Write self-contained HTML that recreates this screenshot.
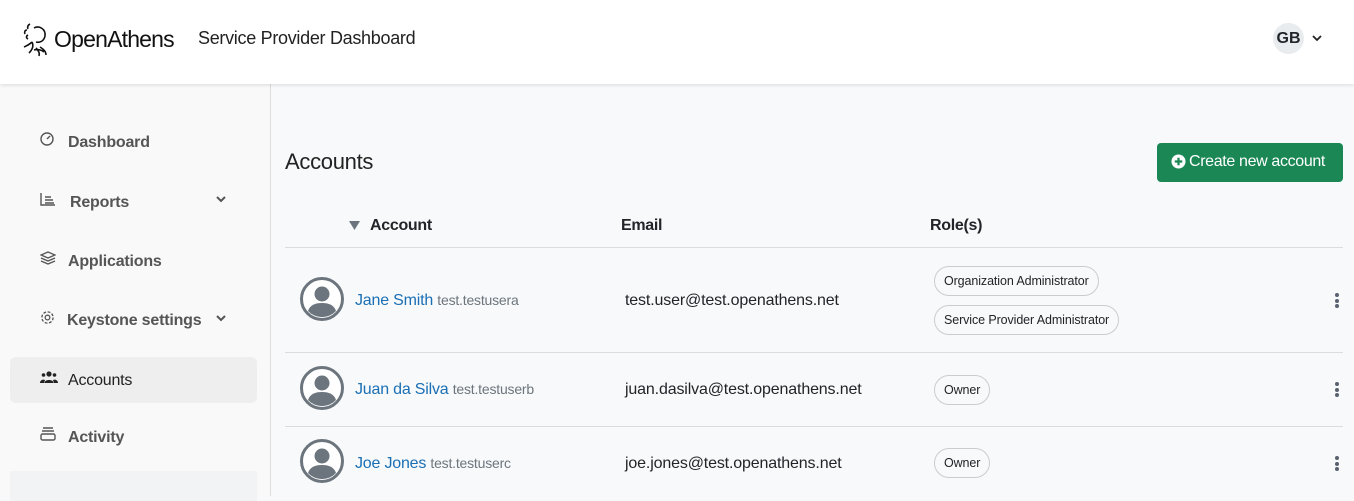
<!DOCTYPE html>
<html><head><meta charset="utf-8"><style>
*{box-sizing:border-box;margin:0;padding:0}
body{width:1354px;height:496px;overflow:hidden;background:#f8f9fa;font-family:"Liberation Sans",Arial,sans-serif;color:#212529;position:relative}
.hdr{position:absolute;left:0;top:0;width:1354px;height:84px;background:#fff;box-shadow:0 1px 4px rgba(0,0,0,.12);z-index:2}
.side{position:absolute;left:0;top:84px;width:271px;height:412px;background:#f9f9f9;border-right:1px solid #ddd}
.ab{position:absolute;white-space:nowrap}
.nav{position:absolute;left:68px;font-size:16px;font-weight:bold;color:#555;letter-spacing:-.2px}
.ic{position:absolute;left:40px}
.chip{position:absolute;left:934px;height:30px;border:1px solid #ccc;border-radius:15px;font-size:12.5px;line-height:28px;padding:0 9px;background:#f8f9fa;letter-spacing:-.1px}
.av{position:absolute;left:300px;width:44px;height:44px}
.name{position:absolute;left:355px;font-size:16px;color:#1a6fb5;letter-spacing:-.2px}
.name span{font-size:14px;color:#6c757d}
.em{position:absolute;left:625px;font-size:16px;letter-spacing:-.15px}
.dots{position:absolute;left:1335px;width:4px}
.dots i{display:block;width:4px;height:4px;border-radius:2px;background:#5a6270;margin-bottom:1.5px}
.line{position:absolute;left:285px;width:1058px;height:1px;background:#dcdcdc}
</style></head><body>
<div class="hdr">
<svg class="ab" style="left:22px;top:20px" width="30" height="38" viewBox="0 0 30 38" fill="none" stroke="#111" stroke-width="1.6"><path d="M8 4c-2 1-3 3-2 5M5 10c-2 0-3 2-2 4M6 15c-2 1-2 3 0 4M12 8c5-3 12 1 11 8-1 5-5 7-9 6M10 22c-3 3-6 4-8 5M10 22c2 4 0 8-3 11M14 28c2 2 4 5 3 8M18 27c3 2 6 4 6 8M12 30c4-1 8 0 10 2"/></svg>
<div class="ab" style="left:54px;top:26px;font-size:23px;color:#111;letter-spacing:-.8px">OpenAthens</div>
<div class="ab" style="left:198px;top:28px;font-size:18px;color:#222;letter-spacing:-.3px">Service Provider Dashboard</div>
<div class="ab" style="left:1273px;top:23px;width:31px;height:31px;border-radius:50%;background:#e9ecef;font-weight:bold;font-size:16px;text-align:center;line-height:31px">GB</div>
<svg class="ab" style="left:1311px;top:34px" width="12" height="8" viewBox="0 0 12 8"><path d="M2 2l4 4 4-4" stroke="#222" stroke-width="1.8" fill="none"/></svg>
</div>
<div class="side"></div>
<div class="ab" style="left:10px;top:357px;width:247px;height:46px;background:#eeeeee;border-radius:6px"></div>
<div class="ab" style="left:10px;top:471px;width:247px;height:30px;background:#f1f3f4"></div>
<svg class="ic" style="top:132px" width="14" height="14" viewBox="0 0 14 14" fill="none" stroke="#555" stroke-width="1.4"><circle cx="7" cy="7" r="6"/><path d="M7 7l3-3"/></svg>
<div class="nav" style="top:134px">Dashboard</div>
<svg class="ic" style="top:192px" width="16" height="14" viewBox="0 0 16 14" fill="none" stroke="#555" stroke-width="1.4"><path d="M1 1v12h14M5 5h6M5 8h8M5 11h9"/></svg>
<div class="nav" style="top:194px;left:70px">Reports</div>
<svg class="ab" style="left:215px;top:195px" width="12" height="8" viewBox="0 0 12 8"><path d="M2 2l4 4 4-4" stroke="#555" stroke-width="2" fill="none"/></svg>
<svg class="ic" style="top:251px" width="16" height="14" viewBox="0 0 16 14" fill="none" stroke="#555" stroke-width="1.3"><path d="M8 1l7 3-7 3-7-3zM1 7l7 3 7-3M1 10l7 3 7-3"/></svg>
<div class="nav" style="top:253px">Applications</div>
<svg class="ic" style="top:310px" width="15" height="15" viewBox="0 0 16 16" fill="none" stroke="#555" stroke-width="1.4"><circle cx="8" cy="8" r="2.5"/><circle cx="8" cy="8" r="6" stroke-dasharray="3 1.7"/></svg>
<div class="nav" style="top:312px;left:67px">Keystone settings</div>
<svg class="ab" style="left:215px;top:314px" width="12" height="8" viewBox="0 0 12 8"><path d="M2 2l4 4 4-4" stroke="#555" stroke-width="2" fill="none"/></svg>
<svg class="ic" style="top:371px" width="18" height="13" viewBox="0 0 18 13" fill="#222"><circle cx="9" cy="3" r="2.6"/><circle cx="3.5" cy="4" r="1.8"/><circle cx="14.5" cy="4" r="1.8"/><path d="M4.5 12c0-4 9-4 9 0zM0 12c0-3 3-4 5-3l-1 3zM18 12c0-3-3-4-5-3l1 3z"/></svg>
<div class="nav" style="top:372px;font-weight:normal;color:#222">Accounts</div>
<svg class="ic" style="top:427px" width="16" height="14" viewBox="0 0 16 14" fill="none" stroke="#555" stroke-width="1.4"><path d="M3 1h10M2 4h12"/><rect x="1" y="7" width="14" height="6" rx="1.5"/></svg>
<div class="nav" style="top:429px">Activity</div>

<div class="ab" style="left:285px;top:149px;font-size:22px;color:#222;letter-spacing:-.3px">Accounts</div>
<div class="ab" style="left:1157px;top:143px;width:186px;height:39px;background:#1a8754;border-radius:4px;color:#fff;font-size:16px;line-height:38px;padding-left:32px;letter-spacing:-.35px">Create new account</div>
<svg class="ab" style="left:1171px;top:154px" width="15" height="15" viewBox="0 0 16 16"><circle cx="8" cy="8" r="7.5" fill="#fff"/><path d="M8 4v8M4 8h8" stroke="#1a8754" stroke-width="2.4"/></svg>
<svg class="ab" style="left:349px;top:221px" width="11" height="9" viewBox="0 0 11 9"><path d="M0 0h11L5.5 9z" fill="#6c757d"/></svg>
<div class="ab" style="left:370px;top:217px;font-size:16px;font-weight:bold;letter-spacing:-.3px">Account</div>
<div class="ab" style="left:621px;top:217px;font-size:16px;font-weight:bold;letter-spacing:-.3px">Email</div>
<div class="ab" style="left:930px;top:217px;font-size:16px;font-weight:bold;letter-spacing:-.3px">Role(s)</div>
<div class="line" style="top:247px"></div>
<div class="line" style="top:352px"></div>
<div class="line" style="top:426px"></div>

<svg class="av" style="top:277px" viewBox="0 0 44 44"><circle cx="22" cy="22" r="20.5" fill="#fff" stroke="#6c757d" stroke-width="3"/><circle cx="22" cy="17" r="7.5" fill="#6c757d"/><path d="M8 34c2-6 7-8 14-8s12 2 14 8a19 19 0 0 1-28 0z" fill="#6c757d"/></svg>
<div class="name" style="top:292px">Jane Smith <span>test.testusera</span></div>
<div class="em" style="top:292px">test.user@test.openathens.net</div>
<div class="chip" style="top:266px">Organization Administrator</div>
<div class="chip" style="top:305px">Service Provider Administrator</div>
<div class="dots" style="top:293px"><i></i><i></i><i></i></div>

<svg class="av" style="top:366px" viewBox="0 0 44 44"><circle cx="22" cy="22" r="20.5" fill="#fff" stroke="#6c757d" stroke-width="3"/><circle cx="22" cy="17" r="7.5" fill="#6c757d"/><path d="M8 34c2-6 7-8 14-8s12 2 14 8a19 19 0 0 1-28 0z" fill="#6c757d"/></svg>
<div class="name" style="top:381px">Juan da Silva <span>test.testuserb</span></div>
<div class="em" style="top:381px">juan.dasilva@test.openathens.net</div>
<div class="chip" style="top:375px">Owner</div>
<div class="dots" style="top:382px"><i></i><i></i><i></i></div>

<svg class="av" style="top:439px" viewBox="0 0 44 44"><circle cx="22" cy="22" r="20.5" fill="#fff" stroke="#6c757d" stroke-width="3"/><circle cx="22" cy="17" r="7.5" fill="#6c757d"/><path d="M8 34c2-6 7-8 14-8s12 2 14 8a19 19 0 0 1-28 0z" fill="#6c757d"/></svg>
<div class="name" style="top:455px">Joe Jones <span>test.testuserc</span></div>
<div class="em" style="top:455px">joe.jones@test.openathens.net</div>
<div class="chip" style="top:448px">Owner</div>
<div class="dots" style="top:456px"><i></i><i></i><i></i></div>
</body></html>
